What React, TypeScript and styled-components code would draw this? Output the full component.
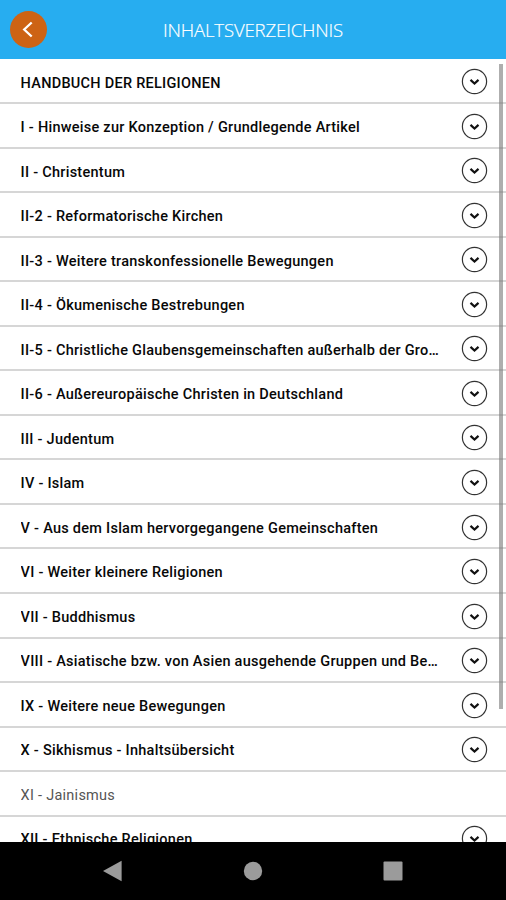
import React from "react";
import styled, { createGlobalStyle } from "styled-components";

const GlobalStyle = createGlobalStyle`
  *, *::before, *::after { box-sizing: border-box; }
  body { margin: 0; background: #fff; overflow: hidden; }
`;

const Screen = styled.div`
  display: flex;
  flex-direction: column;
  height: 900px;
  width: 100%;
  font-family: Roboto, "Liberation Sans", sans-serif;
  background: #fff;
`;

const Header = styled.header`
  flex: none;
  display: grid;
  grid-template-columns: 48px 1fr 48px;
  align-items: center;
  height: 59px;
  padding-left: 10px;
  padding-right: 10px;
  background: #27adf0;
`;

const BackButton = styled.button`
  display: flex;
  align-items: center;
  justify-content: center;
  width: 37px;
  height: 37px;
  padding: 0;
  border: 0;
  border-radius: 50%;
  background: #cd6314;
`;

const Title = styled.h1`
  margin: 1px 0 0;
  text-align: center;
  font-family: "Open Sans", sans-serif;
  font-size: 18.6px;
  font-weight: 300;
  line-height: 24px;
  letter-spacing: -0.15px;
  color: #fff;
  -webkit-text-stroke: 0.2px #fff;
`;

const ListArea = styled.main`
  position: relative;
  flex: 1;
  min-height: 0;
  overflow: hidden;
`;

const List = styled.ul`
  margin: 0;
  padding: 0.8px 0 0;
  list-style: none;
`;

const Row = styled.li`
  display: flex;
  align-items: center;
  justify-content: space-between;
  height: 44.53px;
  padding: 0 18px 0 20.6px;
  border-bottom: 2px solid #d6d6d6;
`;

const Label = styled.span<{ $leaf?: boolean }>`
  width: 420px;
  padding-top: 5px;
  overflow: hidden;
  white-space: nowrap;
  text-overflow: ellipsis;
  font-size: 14.5px;
  line-height: 20px;
  letter-spacing: 0.26px;
  font-weight: ${(p) => (p.$leaf ? 400 : 500)};
  color: ${(p) => (p.$leaf ? "#555" : "#080808")};
`;

const ScrollThumb = styled.div`
  position: absolute;
  top: 5px;
  right: 3px;
  width: 4px;
  height: 645px;
  background: rgba(120, 120, 120, 0.6);
`;

const NavBar = styled.nav`
  flex: none;
  display: grid;
  grid-template-columns: repeat(3, 140px);
  justify-content: center;
  justify-items: center;
  align-items: center;
  height: 58px;
  background: #000;
`;

const Icon = styled.svg`
  display: block;
  flex: none;
`;

const ExpandIcon = styled(Icon)`
  margin-top: 1.6px;
`;

const Expand = () => (
  <ExpandIcon width="27" height="27" viewBox="0 0 27 27" fill="none">
    <circle cx="13.5" cy="13.5" r="12.1" stroke="#333" strokeWidth="1.2" />
    <path d="M9.5 11.9 13.5 15.5 17.5 11.9" stroke="#111" strokeWidth="2.2" />
  </ExpandIcon>
);

const entries: { title: string; leaf?: boolean }[] = [
  { title: "HANDBUCH DER RELIGIONEN" },
  { title: "I - Hinweise zur Konzeption / Grundlegende Artikel" },
  { title: "II - Christentum" },
  { title: "II-2 - Reformatorische Kirchen" },
  { title: "II-3 - Weitere transkonfessionelle Bewegungen" },
  { title: "II-4 - Ökumenische Bestrebungen" },
  { title: "II-5 - Christliche Glaubensgemeinschaften außerhalb der Gro…" },
  { title: "II-6 - Außereuropäische Christen in Deutschland" },
  { title: "III - Judentum" },
  { title: "IV - Islam" },
  { title: "V - Aus dem Islam hervorgegangene Gemeinschaften" },
  { title: "VI - Weiter kleinere Religionen" },
  { title: "VII - Buddhismus" },
  { title: "VIII - Asiatische bzw. von Asien ausgehende Gruppen und Be…" },
  { title: "IX - Weitere neue Bewegungen" },
  { title: "X - Sikhismus - Inhaltsübersicht" },
  { title: "XI - Jainismus", leaf: true },
  { title: "XII - Ethnische Religionen" },
];

export default function App() {
  return (
    <Screen>
      <GlobalStyle />
      <Header>
        <BackButton aria-label="Zurück">
          <Icon width="37" height="37" viewBox="0 0 37 37" fill="none">
            <path d="M21.7 11.5 14.2 18.5 21.7 25.5" stroke="#fff" strokeWidth="2.3" />
          </Icon>
        </BackButton>
        <Title>INHALTSVERZEICHNIS</Title>
      </Header>
      <ListArea>
        <List>
          {entries.map((e) => (
            <Row key={e.title}>
              <Label $leaf={e.leaf}>{e.title}</Label>
              {!e.leaf && <Expand />}
            </Row>
          ))}
        </List>
        <ScrollThumb />
      </ListArea>
      <NavBar>
        <Icon width="20" height="22" viewBox="0 0 20 22">
          <path d="M0 11 18.6 0.7V21.3Z" fill="#9b9b9b" />
        </Icon>
        <Icon width="20" height="20" viewBox="0 0 20 20">
          <circle cx="10" cy="10" r="9.2" fill="#9b9b9b" />
        </Icon>
        <Icon width="20" height="20" viewBox="0 0 20 20">
          <rect x="0.5" y="0.5" width="19" height="19" rx="1" fill="#9b9b9b" />
        </Icon>
      </NavBar>
    </Screen>
  );
}
